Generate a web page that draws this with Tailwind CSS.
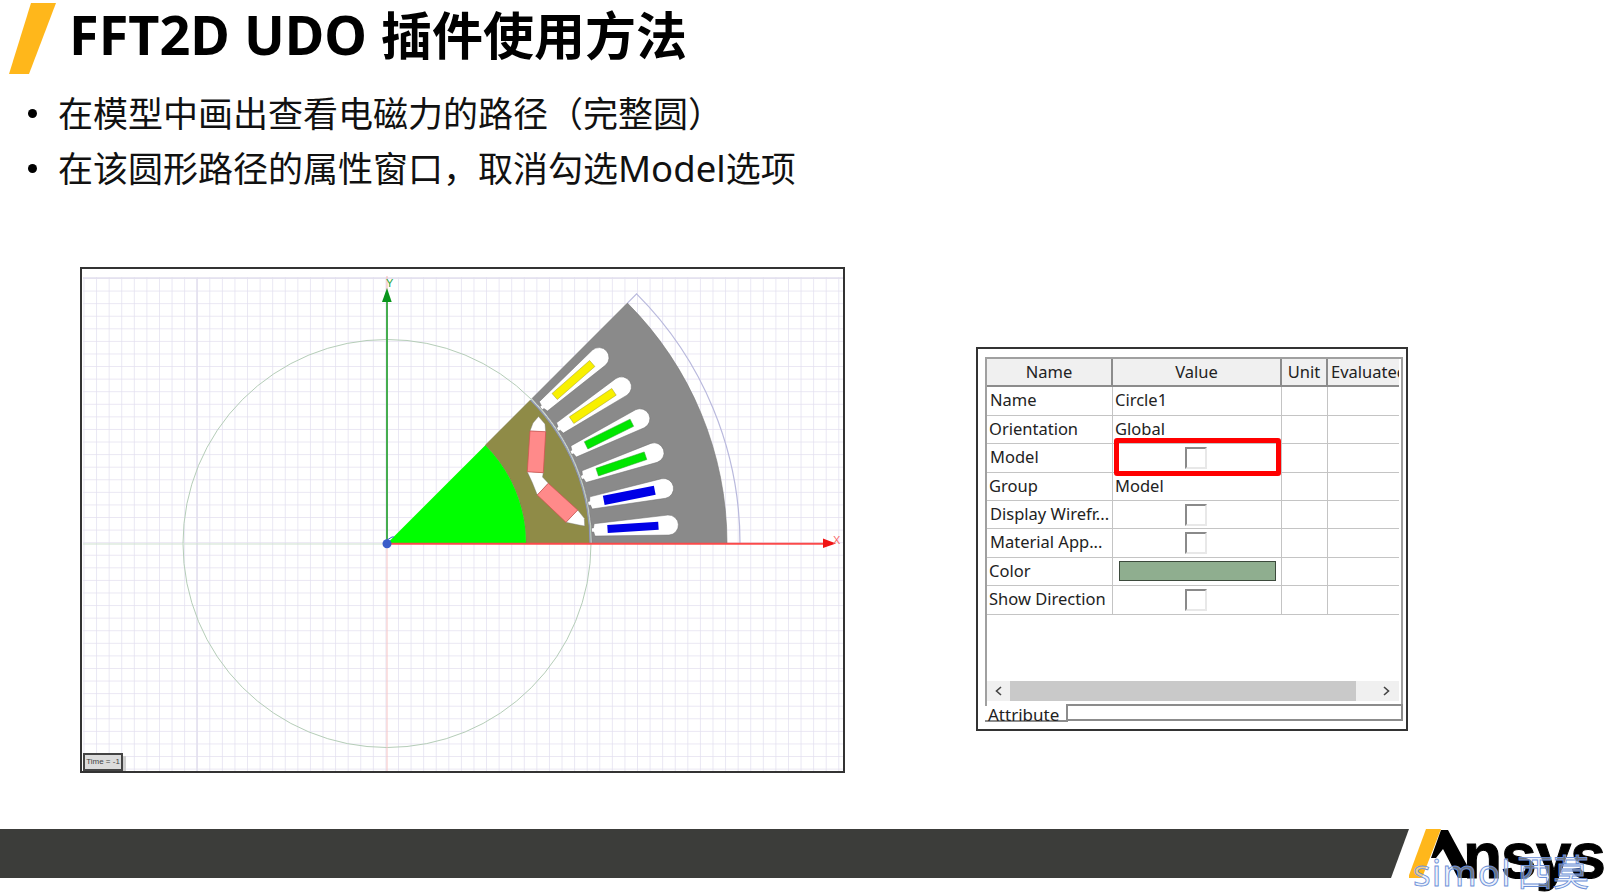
<!DOCTYPE html>
<html lang="zh-CN">
<head>
<meta charset="utf-8">
<script src="https://cdn.jsdelivr.net/npm/@tailwindcss/browser@4"></script>
</head>
<body class="m-0 bg-white">
<div class="w-[1608px] h-[893px] overflow-hidden bg-white flex flex-col text-black font-['Noto_Sans','Noto_Sans_CJK_SC',sans-serif]">

  <header class="flex items-start h-[77px] pt-[3px] pl-[9px] shrink-0">
    <svg class="w-[48px] h-[72px] shrink-0" viewBox="0 0 48 72"><polygon points="22,0 47,0 20,71 0,71" fill="#ffb71b"/></svg>
    <h1 class="ml-[12px] -mt-[2px] text-[51px] leading-[66px] font-bold whitespace-nowrap"><span class="text-[54px]">FFT2D UDO</span><span class="ml-[14px]">插件使用方法</span></h1>
  </header>

  <ul class="h-[190px] shrink-0 pl-[28px] pt-[9px] text-[35px] leading-[55px] text-[#111]">
    <li class="flex items-center whitespace-nowrap"><span class="w-[9px] h-[9px] rounded-full bg-black mr-[21px]"></span>在模型中画出查看电磁力的路径（完整圆）</li>
    <li class="flex items-center whitespace-nowrap"><span class="w-[9px] h-[9px] rounded-full bg-black mr-[21px]"></span>在该圆形路径的属性窗口，取消勾选<span class="text-[36.5px]">Model</span>选项</li>
  </ul>

  <main class="flex items-start h-[562px] shrink-0 pl-[80px]">
    <div class="w-[765px] h-[506px] shrink-0 relative border-2 border-[#333] bg-white overflow-hidden">
      <svg class="absolute -left-[2px] -top-[2px] w-[765px] h-[506px]" viewBox="80 267 765 506">
        <defs>
          <pattern id="grid" x="83.5" y="278" width="12.58" height="12.58" patternUnits="userSpaceOnUse">
            <path d="M0 0H12.58M0 0V12.58" stroke="#e3e0f0" stroke-width="1.5" fill="none"/>
          </pattern>
          <path id="slot" d="M205 -2H207L208 -6.2L282 -10A10 10 0 0 1 282 10L208 6.2L207 2H205Z" fill="#fff" stroke="#6f6f6f" stroke-width="0.5"/>
        </defs>
        <rect x="83" y="277" width="762" height="496" fill="url(#grid)"/>
        <path d="M83 278H845M197 278V773" stroke="#e2dfee" stroke-width="1.5" fill="none"/>
        <circle cx="387" cy="543.5" r="204" fill="none" stroke="#b5cdb8" stroke-width="1"/>
        <path d="M83 544H387" stroke="#cfe2cf" stroke-width="1"/>
        <path d="M387 544V773" stroke="#f7c4c4" stroke-width="1"/>
        <path d="M387 276V290" stroke="#f5b5b5" stroke-width="1"/>
        <path d="M740 543.5A353 353 0 0 0 636.6 293.9L627.4 303.1" fill="none" stroke="#b9b9dd" stroke-width="1.2"/>
        <path d="M592 543.5H727A340 340 0 0 0 627.4 303.1L532 398.5A205 205 0 0 1 592 543.5Z" fill="#8a8a8a" stroke="#777" stroke-width="0.6"/>
        <g transform="translate(387 543.5) rotate(-3.75)"><use href="#slot"/><rect x="221" y="-4" width="51" height="8" fill="#0000e6"/></g>
        <g transform="translate(387 543.5) rotate(-11.25)"><use href="#slot"/><rect x="221" y="-4.6" width="52" height="9.2" fill="#0000e6"/></g>
        <g transform="translate(387 543.5) rotate(-18.75)"><use href="#slot"/><rect x="222" y="-4" width="51" height="8" fill="#00e600" stroke="#35a035" stroke-width="0.5"/></g>
        <g transform="translate(387 543.5) rotate(-26.25)"><use href="#slot"/><rect x="222" y="-4" width="51" height="8" fill="#00e600" stroke="#35a035" stroke-width="0.5"/></g>
        <g transform="translate(387 543.5) rotate(-33.75)"><use href="#slot"/><rect x="222" y="-4" width="51" height="8" fill="#f8f000" stroke="#a8a030" stroke-width="0.5"/></g>
        <g transform="translate(387 543.5) rotate(-41.25)"><use href="#slot"/><rect x="223" y="-4" width="50" height="8" fill="#f8f000" stroke="#a8a030" stroke-width="0.5"/></g>
        <path d="M526 543.5H590A203 203 0 0 0 530.5 400L485.3 445.2A139 139 0 0 1 526 543.5Z" fill="#8f8b47" stroke="#706c33" stroke-width="0.6"/>
        <path d="M387 543.5H526A139 139 0 0 0 485.3 445.2Z" fill="#00ff00"/>
        <path d="M590 543.5A203 203 0 0 0 530.5 400" fill="none" stroke="#8f96b8" stroke-width="1.2"/>
        <polygon points="538.5,416.5 545,424 545.7,432 530,431 533,423" fill="#fff" stroke="#777" stroke-width="0.4"/>
        <polygon points="527.3,471.7 543.3,472.7 542.5,477 548.3,483.3 537.3,495 532.5,483" fill="#fff" stroke="#777" stroke-width="0.4"/>
        <polygon points="577.7,510 584.3,518.3 584.7,526 579,525 566,522.3" fill="#fff" stroke="#777" stroke-width="0.4"/>
        <polygon points="530,431 545.7,431.7 543.3,472.7 527.3,471.7" fill="#ff8a8a" stroke="#d25050" stroke-width="0.7"/>
        <polygon points="548.3,483.3 577.7,510 566,522.3 537.3,495" fill="#ff8a8a" stroke="#d25050" stroke-width="0.7"/>
        <path d="M387 544V300" stroke="#45ad4f" stroke-width="2"/>
        <polygon points="387,288 391.7,302 382,302" fill="#08951c"/>
        <path d="M387 543.7H825" stroke="#fb4a4a" stroke-width="2"/>
        <polygon points="836,543.5 823,538.5 823,548" fill="#f01414"/>
        <text x="386" y="287" font-family="Liberation Sans" font-size="11" fill="#2aa33a">Y</text>
        <text x="833" y="544" font-family="Liberation Sans" font-size="11" fill="#f86a6a">X</text>
        <path d="M387 540L392 537H394" fill="none" stroke="#3a5cc9" stroke-width="1"/>
        <circle cx="387" cy="543.7" r="4.5" fill="#3a5cc9"/>
      </svg>
      <div class="absolute left-[1px] bottom-0 w-[40px] h-[18px] border-2 border-[#444] bg-[#dcdcdc] shadow-[3px_3px_0_#cfcfcf] flex items-center justify-center text-[8px] text-[#444] font-['Liberation_Sans',sans-serif] whitespace-nowrap">Time = -1</div>
    </div>

    <section class="ml-[131px] mt-[80px] w-[432px] h-[384px] shrink-0 border-2 border-[#333] bg-white pt-[8px] pl-[7px] text-[16.5px] leading-[25px] text-[#222]">
      <div class="w-[418px] h-[349px] border-l-2 border-t-2 border-r-2 border-[#a0a0a0] flex flex-col">
        <div class="w-[412px] grid grid-cols-[126px_169px_46px_71px] auto-rows-[28.4px] overflow-hidden">
          <div class="bg-[#f0f0f0] border-r-2 border-b-2 border-[#8c8c8c] text-center">Name</div>
          <div class="bg-[#f0f0f0] border-r-2 border-b-2 border-[#8c8c8c] text-center">Value</div>
          <div class="bg-[#f0f0f0] border-r-2 border-b-2 border-[#8c8c8c] text-center">Unit</div>
          <div class="bg-[#f0f0f0] border-b-2 border-[#8c8c8c] pl-[3px] whitespace-nowrap overflow-hidden">Evaluated</div>

          <div class="border-r border-b border-[#c4c4c4] pl-[3px]">Name</div>
          <div class="border-r border-b border-[#c4c4c4] pl-[2px]">Circle1</div>
          <div class="border-r border-b border-[#c4c4c4]"></div>
          <div class="border-b border-[#c4c4c4]"></div>

          <div class="border-r border-b border-[#c4c4c4] pl-[2px]">Orientation</div>
          <div class="border-r border-b border-[#c4c4c4] pl-[2px]">Global</div>
          <div class="border-r border-b border-[#c4c4c4]"></div>
          <div class="border-b border-[#c4c4c4]"></div>

          <div class="border-r border-b border-[#c4c4c4] pl-[3px]">Model</div>
          <div class="relative border-r border-b border-[#c4c4c4] flex items-center justify-center">
            <span class="ml-[-2px] w-[22px] h-[22px] border-2 border-t-[#8a8a8a] border-l-[#8a8a8a] border-r-[#e8e8e8] border-b-[#e8e8e8] bg-white"></span>
            <span class="absolute left-[1px] right-0 -top-[6px] -bottom-[4px] border-[5px] border-[#ff0000] rounded-[3px]"></span>
          </div>
          <div class="border-r border-b border-[#c4c4c4]"></div>
          <div class="border-b border-[#c4c4c4]"></div>

          <div class="border-r border-b border-[#c4c4c4] pl-[2px]">Group</div>
          <div class="border-r border-b border-[#c4c4c4] pl-[2px]">Model</div>
          <div class="border-r border-b border-[#c4c4c4]"></div>
          <div class="border-b border-[#c4c4c4]"></div>

          <div class="border-r border-b border-[#c4c4c4] pl-[3px] whitespace-nowrap">Display Wirefr...</div>
          <div class="border-r border-b border-[#c4c4c4] flex items-center justify-center">
            <span class="ml-[-2px] w-[22px] h-[22px] border-2 border-t-[#8a8a8a] border-l-[#8a8a8a] border-r-[#e8e8e8] border-b-[#e8e8e8] bg-white"></span>
          </div>
          <div class="border-r border-b border-[#c4c4c4]"></div>
          <div class="border-b border-[#c4c4c4]"></div>

          <div class="border-r border-b border-[#c4c4c4] pl-[3px] whitespace-nowrap">Material App...</div>
          <div class="border-r border-b border-[#c4c4c4] flex items-center justify-center">
            <span class="ml-[-2px] w-[22px] h-[22px] border-2 border-t-[#8a8a8a] border-l-[#8a8a8a] border-r-[#e8e8e8] border-b-[#e8e8e8] bg-white"></span>
          </div>
          <div class="border-r border-b border-[#c4c4c4]"></div>
          <div class="border-b border-[#c4c4c4]"></div>

          <div class="border-r border-b border-[#c4c4c4] pl-[2px]">Color</div>
          <div class="border-r border-b border-[#c4c4c4] flex items-center justify-center">
            <span class="w-[157px] h-[20px] border border-[#3c4a3c] bg-[#8fae8f]"></span>
          </div>
          <div class="border-r border-b border-[#c4c4c4]"></div>
          <div class="border-b border-[#c4c4c4]"></div>

          <div class="border-r border-b border-[#c4c4c4] pl-[2px] whitespace-nowrap">Show Direction</div>
          <div class="border-r border-b border-[#c4c4c4] flex items-center justify-center">
            <span class="ml-[-2px] w-[22px] h-[22px] border-2 border-t-[#8a8a8a] border-l-[#8a8a8a] border-r-[#e8e8e8] border-b-[#e8e8e8] bg-white"></span>
          </div>
          <div class="border-r border-b border-[#c4c4c4]"></div>
          <div class="border-b border-[#c4c4c4]"></div>
        </div>
        <div class="mt-auto mb-[5px] w-[412px] h-[20px] flex items-center bg-[#f0f0f0]">
          <svg class="w-[23px] h-[20px] shrink-0" viewBox="0 0 23 20"><path d="M14 6L9.5 10L14 14" fill="none" stroke="#444" stroke-width="1.6"/></svg>
          <div class="w-[346px] h-[20px] bg-[#c9c9c9]"></div>
          <svg class="w-[43px] h-[20px] shrink-0" viewBox="0 0 43 20"><path d="M28 6L32.5 10L28 14" fill="none" stroke="#444" stroke-width="1.6"/></svg>
        </div>
      </div>
      <div class="flex w-[418px] h-[18px] -mt-[2px]">
        <div class="w-[83px] h-[18px] border-b-2 border-r-2 border-[#8c8c8c] pl-[3px] leading-[21px] text-[17px] whitespace-nowrap">Attribute</div>
        <div class="flex-1 h-[17px] border-t-2 border-b-2 border-r-2 border-[#8c8c8c]"></div>
      </div>
    </section>
  </main>

  <footer class="flex items-start h-[64px] shrink-0">
    <div class="w-[1409px] h-[49px] bg-[#3c3d3a] shrink-0 [clip-path:polygon(0_0,100%_0,1391px_100%,0_100%)]"></div>
    <svg class="w-[199px] h-[64px] shrink-0" viewBox="1409 829 199 64">
      <polygon points="1426,829 1441,829 1422,878 1408,878" fill="#ffb71b"/>
      <polygon points="1441,830 1448,830 1474,878 1458,878 1443,849 1436,858 1431,858" fill="#000"/>
      <text x="1463" y="878" font-family="Liberation Sans" font-weight="700" font-size="64" letter-spacing="-1" fill="#000" stroke="#000" stroke-width="1">nsys</text>
      <text x="1413" y="886" font-family="Noto Sans" font-size="37" letter-spacing="1" fill="#dbe6f8" fill-opacity="0.5" stroke="#6c90d8" stroke-width="0.9">simol</text>
      <text x="1517" y="886" font-family="Noto Sans CJK SC" font-size="36" fill="#dbe6f8" fill-opacity="0.5" stroke="#6c90d8" stroke-width="0.9">西莫</text>
    </svg>
  </footer>
</div>
</body>
</html>
